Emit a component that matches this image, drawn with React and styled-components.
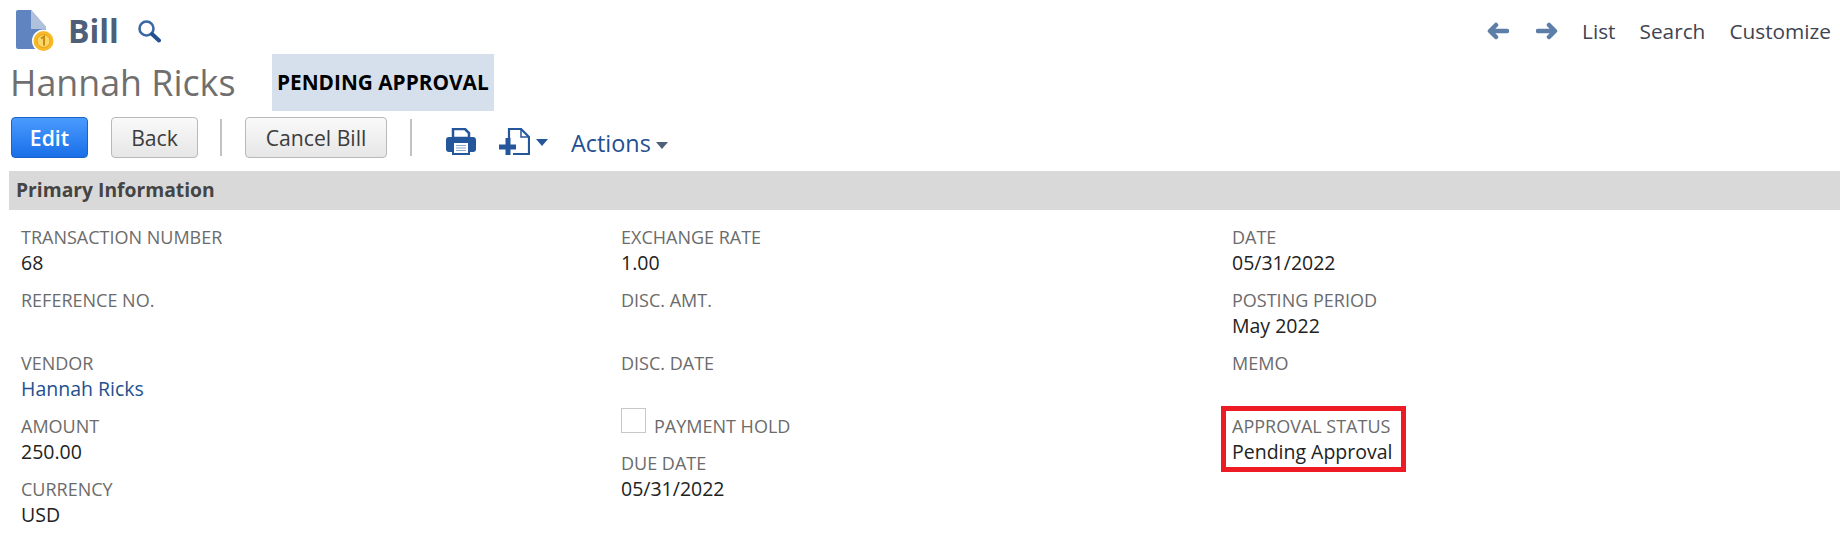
import React from "react";
import styled, { createGlobalStyle } from "styled-components";

const GlobalStyle = createGlobalStyle`
  html, body {
    margin: 0;
    background: #fff;
    font-family: "Open Sans", "Liberation Sans", sans-serif;
  }
`;

const Page = styled.div`
  width: 1840px;
  height: 540px;
  overflow: hidden;
  padding-left: 9px;
  box-sizing: border-box;
`;

const TopBar = styled.div`
  display: flex;
  align-items: center;
  justify-content: space-between;
  height: 54px;
  box-sizing: border-box;
  padding: 7px 9px 0 0;
`;

const TitleGroup = styled.div`
  display: flex;
  align-items: center;
  padding-left: 7px;
`;

const PageTitle = styled.h1`
  margin: 0 0 0 12px;
  font-size: 32px;
  font-weight: 700;
  line-height: 1;
  color: #4d5f79;
`;

const SearchIcon = styled.svg`
  margin-left: 18px;
  width: 24px;
  height: 24px;
`;

const TopNav = styled.nav`
  display: flex;
  align-items: center;
  gap: 24px;
`;

const NavArrow = styled.svg`
  width: 22px;
  height: 18px;
  margin-right: ${(p) => p.$gap || 0}px;
`;

const NavLink = styled.span`
  font-size: 20.8px;
  color: #3f4450;
`;

const RecordRow = styled.div`
  display: flex;
  align-items: stretch;
  height: 57px;
`;

const RecordName = styled.div`
  font-size: 35.8px;
  line-height: 57px;
  color: #6f6f6f;
  padding-left: 1px;
  width: 262px;
`;

const StatusBadge = styled.div`
  background: #d6e0ec;
  color: #000;
  font-size: 20.8px;
  font-weight: 700;
  line-height: 56px;
  padding: 0 5px;
  width: 222px;
  box-sizing: border-box;
  white-space: nowrap;
`;

const Toolbar = styled.div`
  display: flex;
  align-items: center;
  height: 41px;
  margin-top: 6px;
  padding-left: 2px;
`;

const Button = styled.div`
  box-sizing: border-box;
  height: 41px;
  width: ${(p) => p.$width}px;
  margin-right: ${(p) => p.$gap}px;
  display: flex;
  align-items: center;
  justify-content: center;
  border-radius: 4px;
  font-size: 21.2px;
  font-weight: ${(p) => (p.$primary ? 600 : 500)};
  border: 1px solid ${(p) => (p.$primary ? "#1b63c4" : "#b9b9b9")};
  color: ${(p) => (p.$primary ? "#fff" : "#3c3c3c")};
  background: ${(p) =>
    p.$primary
      ? "linear-gradient(#4a9bff, #1a6fe8)"
      : "linear-gradient(#fafafa, #e6e6e6)"};
`;

const Divider = styled.div`
  width: 2px;
  height: 37px;
  background: #c2c2c2;
  margin-right: ${(p) => p.$gap}px;
`;

const ToolIcon = styled.svg`
  flex: none;
  margin-top: 8px;
  margin-right: ${(p) => p.$gap}px;
`;

const ActionsLink = styled.span`
  font-size: 23.4px;
  color: #24508f;
  margin: 11px 5px 0 0;
`;

const Caret = styled.span`
  width: 0;
  height: 0;
  border-left: 6px solid transparent;
  border-right: 6px solid transparent;
  border-top: 7px solid ${(p) => p.$color};
  margin-top: ${(p) => p.$top}px;
  margin-right: ${(p) => p.$gap || 0}px;
`;

const SectionBar = styled.div`
  height: 39px;
  margin-top: 13px;
  background: #d9d9d9;
  color: #444;
  font-size: 19.3px;
  font-weight: 700;
  line-height: 38px;
  padding-left: 7px;
`;

const FieldGrid = styled.div`
  display: grid;
  grid-template-columns: 600px 611px 1fr;
  padding: 14px 0 0 12px;
`;

const Column = styled.div`
  display: flex;
  flex-direction: column;
`;

const Field = styled.div`
  position: relative;
  height: 63px;
  ${(p) =>
    p.$flagged &&
    `
    &::after {
      content: "";
      position: absolute;
      left: -11px;
      top: -7px;
      width: 185px;
      height: 66px;
      box-sizing: border-box;
      border: 5px solid #ed1c24;
    }
  `}
`;

const Label = styled.div`
  font-size: 18px;
  line-height: 26px;
  color: #6b6b6b;
  white-space: nowrap;
`;

const Value = styled.div`
  font-size: 19.5px;
  line-height: 26px;
  color: ${(p) => (p.$link ? "#24508f" : "#222")};
  white-space: nowrap;
`;

const CheckRow = styled.div`
  display: flex;
  align-items: flex-start;
  height: 37px;
`;

const CheckBox = styled.div`
  width: 25px;
  height: 25px;
  box-sizing: border-box;
  border: 1px solid #c8c8c8;
  margin: -5px 8px 0 0;
`;

const columns = [
  [
    { label: "TRANSACTION NUMBER", value: "68" },
    { label: "REFERENCE NO." },
    { label: "VENDOR", value: "Hannah Ricks", link: true },
    { label: "AMOUNT", value: "250.00" },
    { label: "CURRENCY", value: "USD" },
  ],
  [
    { label: "EXCHANGE RATE", value: "1.00" },
    { label: "DISC. AMT." },
    { label: "DISC. DATE" },
    { label: "PAYMENT HOLD", check: true },
    { label: "DUE DATE", value: "05/31/2022" },
  ],
  [
    { label: "DATE", value: "05/31/2022" },
    { label: "POSTING PERIOD", value: "May 2022" },
    { label: "MEMO" },
    { label: "APPROVAL STATUS", value: "Pending Approval", flagged: true },
  ],
];

const BillIcon = () => (
  <svg width="40" height="42" viewBox="0 0 40 42">
    <path d="M2 0h13l15 17v22H2a2 2 0 0 1-2-2V2a2 2 0 0 1 2-2z" fill="#5f84bf" />
    <path d="M15 0l15 17v2H15z" fill="#b0c1de" />
    <circle cx="27.500" cy="31" r="11.500" fill="#fff" />
    <circle cx="27.500" cy="31" r="10" fill="#f7b928" />
    <circle cx="27.500" cy="31" r="6.500" fill="#fbd768" stroke="#e8a317" />
    <path d="M25 28.500l3-2v9" fill="none" stroke="#c98a10" strokeWidth="2" />
  </svg>
);

const App = () => (
  <>
    <GlobalStyle />
    <Page>
      <TopBar>
        <TitleGroup>
          <BillIcon />
          <PageTitle>Bill</PageTitle>
          <SearchIcon viewBox="0 0 24 24">
            <circle cx="9.500" cy="9.500" r="7" fill="none" stroke="#3a67a5" strokeWidth="2.600" />
            <path d="M15 15l7 6.500" stroke="#24508f" strokeWidth="4" strokeLinecap="round" />
          </SearchIcon>
        </TitleGroup>
        <TopNav>
          <NavArrow viewBox="0 0 22 18" $gap={3}>
            <path d="M9 3L3 9l6 6M4 9h16" fill="none" stroke="#5d7ea6" strokeWidth="4.500" strokeLinecap="round" strokeLinejoin="round" />
          </NavArrow>
          <NavArrow viewBox="0 0 22 18">
            <path d="M13 3l6 6-6 6M18 9H2" fill="none" stroke="#5d7ea6" strokeWidth="4.500" strokeLinecap="round" strokeLinejoin="round" />
          </NavArrow>
          <NavLink>List</NavLink>
          <NavLink>Search</NavLink>
          <NavLink>Customize</NavLink>
        </TopNav>
      </TopBar>
      <RecordRow>
        <RecordName>Hannah Ricks</RecordName>
        <StatusBadge>PENDING APPROVAL</StatusBadge>
      </RecordRow>
      <Toolbar>
        <Button $primary $width={77} $gap={23}>Edit</Button>
        <Button $width={87} $gap={22}>Back</Button>
        <Divider $gap={23} />
        <Button $width={142} $gap={23}>Cancel Bill</Button>
        <Divider $gap={34} />
        <ToolIcon width="30" height="27" viewBox="0 0 30 27" $gap={23}>
          <path d="M7 1h12l4 4v5H7z" fill="none" stroke="#24569c" strokeWidth="2.500" />
          <path d="M3 9h24a3 3 0 0 1 3 3v9a3 3 0 0 1-3 3h-3v3H6v-3H3a3 3 0 0 1-3-3v-9a3 3 0 0 1 3-3z" fill="#24569c" />
          <path d="M8 15h14v10H8z" fill="#fff" />
          <path d="M10 17.500h10M10 20h10M10 22.500h10" stroke="#8ba6cc" strokeWidth="1.200" />
        </ToolIcon>
        <ToolIcon width="31" height="27" viewBox="0 0 31 27" $gap={6}>
          <path d="M10 12V1h12l8 8v17H14" fill="none" stroke="#24569c" strokeWidth="2.200" />
          <path d="M22 1v8h8" fill="none" stroke="#24569c" strokeWidth="1.500" />
          <path d="M9 10v17M0 19h17" stroke="#24569c" strokeWidth="5" />
        </ToolIcon>
        <Caret $color="#24569c" $top={9} $gap={23} />
        <ActionsLink>Actions</ActionsLink>
        <Caret $color="#4d5f79" $top={15} />
      </Toolbar>
      <SectionBar>Primary Information</SectionBar>
      <FieldGrid>
        {columns.map((fields, i) => (
          <Column key={i}>
            {fields.map((f) =>
              f.check ? (
                <CheckRow key={f.label}>
                  <CheckBox />
                  <Label>{f.label}</Label>
                </CheckRow>
              ) : (
                <Field key={f.label} $flagged={f.flagged}>
                  <Label>{f.label}</Label>
                  {f.value && <Value $link={f.link}>{f.value}</Value>}
                </Field>
              )
            )}
          </Column>
        ))}
      </FieldGrid>
    </Page>
  </>
);

export default App;
